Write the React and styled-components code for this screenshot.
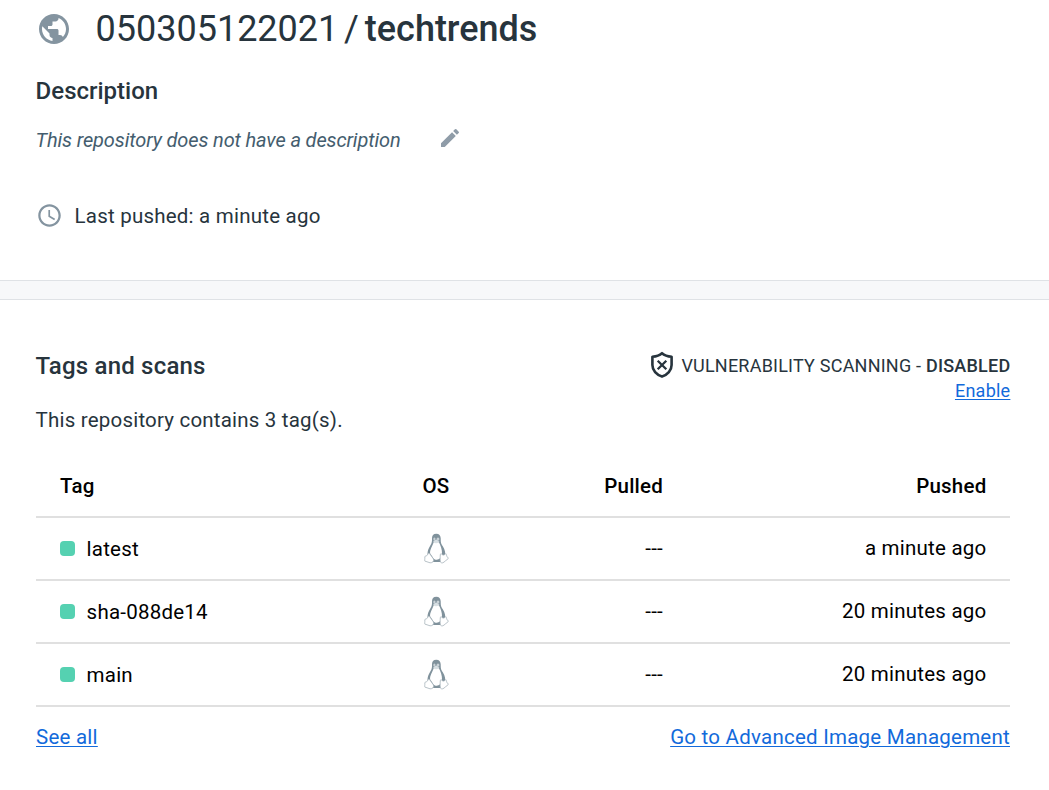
import React from "react";
import styled, { createGlobalStyle } from "styled-components";
import { MdPublic, MdEdit, MdOutlineWatchLater } from "react-icons/md";

const GlobalStyle = createGlobalStyle`
  * { box-sizing: border-box; }
  body {
    margin: 0;
    background: #fff;
    color: #27343d;
    font-family: Roboto, "Liberation Sans", sans-serif;
    font-size: 20.5px;
  }
`;

const Page = styled.main`
  width: 1049px;
  height: 790px;
  overflow: hidden;
  display: flex;
  flex-direction: column;
`;

const Summary = styled.section`
  height: 280px;
  padding: 0 36px;
  display: flex;
  flex-direction: column;
`;

const Title = styled.h1`
  display: flex;
  align-items: center;
  height: 58px;
  margin: 0 0 17px;
  font-size: 36px;
  font-weight: 400;
  white-space: pre;
  word-spacing: -3.1px;
  svg { color: #8494a0; margin-right: 23.5px; }
`;

const TitleText = styled.span`
  font-weight: ${(p) => (p.$strong ? 500 : 400)};
`;

const Heading = styled.h2`
  margin: 0 0 0 -0.4px;
  height: 32px;
  line-height: 32px;
  font-size: 24px;
  font-weight: 500;
  letter-spacing: ${(p) => p.$spacing || "0"};
`;

const Description = styled.div`
  display: flex;
  align-items: center;
  height: 32px;
  margin: 17px 0 0 -0.5px;
  color: #445d6e;
  font-size: 20px;
  font-style: italic;
  letter-spacing: -0.14px;
  svg { color: #8f9ca8; margin: -5px 0 0 37.5px; }
`;

const LastPushed = styled.div`
  display: flex;
  align-items: center;
  height: 32px;
  margin-top: 44px;
  letter-spacing: 0.22px;
  svg { color: #8494a0; margin: -2px 11.5px 0 0; }
`;

const Divider = styled.div`
  height: 20px;
  background: #f7f8fa;
  border: solid #dfe2e6;
  border-width: 1px 0;
`;

const Tags = styled.section`
  padding: 50px 39px 0 36px;
`;

const TagsHeader = styled.header`
  display: flex;
  justify-content: space-between;
  height: 88px;
`;

const Count = styled.p`
  margin: 22px 0 0 -0.4px;
  line-height: 32px;
  letter-spacing: 0.2px;
`;

const Scanning = styled.div`
  display: flex;
  flex-direction: column;
  align-items: flex-end;
  margin-right: -0.4px;
  font-size: 18px;
  letter-spacing: 0.22px;
`;

const ScanStatus = styled.div`
  display: flex;
  align-items: center;
  height: 30px;
  white-space: pre;
  svg { margin-right: 7px; }
  b { font-weight: 500; }
`;

const Link = styled.a`
  color: #126adb;
  text-decoration: underline;
  text-decoration-thickness: 1px;
  text-underline-offset: 2px;
  letter-spacing: 0.24px;
`;

const Table = styled.div`
  margin-top: 17px;
  color: #000;
`;

const Row = styled.div`
  display: grid;
  grid-template-columns: 330px 92px 181px 1fr;
  align-items: center;
  height: 63px;
  padding: 0 23.6px 0 24px;
  border-bottom: 2px solid #e0e0e0;
  letter-spacing: 0.22px;
  font-weight: ${(p) => (p.$head ? 500 : 400)};
`;

const Cell = styled.div`
  display: flex;
  align-items: center;
  gap: 11.6px;
  justify-content: ${(p) => p.$align || "flex-start"};
  margin-top: ${(p) => p.$shift || "0"};
`;

const Status = styled.i`
  width: 15px;
  height: 15px;
  border-radius: 4px;
  background: #55d1b1;
`;

const Footer = styled.footer`
  display: flex;
  justify-content: space-between;
  height: 60px;
  line-height: 60px;
`;

const ShieldIcon = () => (
  <svg width="24" height="28" viewBox="0 0 24 28" fill="none" stroke="#27343d">
    <path d="M12 2.2C9.5 4.4 6.2 5.4 2.4 5.8V14C2.4 19.4 6.5 23.9 12 25.6C17.5 23.9 21.6 19.4 21.6 14V5.8C17.8 5.4 14.5 4.4 12 2.2Z" strokeWidth="2.6" strokeLinejoin="round" />
    <path d="M7.7 9.7L16.3 18.3M16.3 9.7L7.7 18.3" strokeWidth="2.3" />
  </svg>
);

const LinuxIcon = () => (
  <svg width="25" height="31" viewBox="0 0 25 31">
    <path d="M12.3.7C9.4.7 7.8 2.7 8 5.6C8.1 8.3 8 10 6.3 12.5C4.5 15.5 3.4 18 3.5 21.5L5.5 25.5L9 29H17L21.3 22C21.5 17.5 19.5 14.2 17.8 11.8C16.6 9.8 16.8 8 16.7 5.3C16.6 2.4 15.2.7 12.3.7Z" fill="#80929c" />
    <path d="M9.6 9.2C8.6 13 5.7 16.5 6.1 20.3L9.4 25.2C11.3 27.3 14.1 27.3 16.3 25.1L18 20.3C18.2 16.5 16.5 12.2 14.9 9.2Z" fill="#fff" />
    <ellipse cx="10.4" cy="6" rx="1.1" ry="1.5" fill="#c9d2d7" />
    <ellipse cx="14" cy="6" rx="1.4" ry="1.6" fill="#c9d2d7" />
    <path d="M9 8.2L12.2 6.5L15.5 8.2L12 10.6Z" fill="#d7dfe3" />
    <path d="M5.2 20.1L9.5 26C10.2 28.3 8.5 30 6.1 29.8L.9 28.1C.3 27.3 1.1 26 .8 23.9C.8 22.7 2.8 23 3.3 22.2C4.1 21.1 3.8 20.1 5.2 20.1ZM17.3 20.7C18.4 22.6 20.4 22.6 21.7 20.6C22.7 21.2 22.1 23.3 24.3 25C24.8 25.8 22 27.1 20 29.1C18.4 30.5 16.3 30 16.2 28.1C16 25.5 16.2 23.7 16.3 21.9C16.4 21 16.8 20.6 17.3 20.7Z" fill="#fff" stroke="#a6b3ba" strokeWidth=".8" />
  </svg>
);

const tags = [
  { name: "latest", pushed: "a minute ago" },
  { name: "sha-088de14", pushed: "20 minutes ago" },
  { name: "main", pushed: "20 minutes ago" },
];

export default function App() {
  return (
    <Page>
      <GlobalStyle />
      <Summary>
        <Title>
          <MdPublic size={36} />
          <TitleText>050305122021 / </TitleText>
          <TitleText $strong>techtrends</TitleText>
        </Title>
        <Heading>Description</Heading>
        <Description>
          This repository does not have a description
          <MdEdit size={24} />
        </Description>
        <LastPushed>
          <MdOutlineWatchLater size={27} />
          Last pushed: a minute ago
        </LastPushed>
      </Summary>
      <Divider />
      <Tags>
        <TagsHeader>
          <div>
            <Heading $spacing="0.2px">Tags and scans</Heading>
            <Count>This repository contains 3 tag(s).</Count>
          </div>
          <Scanning>
            <ScanStatus>
              <ShieldIcon />
              VULNERABILITY SCANNING - <b>DISABLED</b>
            </ScanStatus>
            <Link>Enable</Link>
          </Scanning>
        </TagsHeader>
        <Table>
          <Row $head>
            <Cell>Tag</Cell>
            <Cell $align="center">OS</Cell>
            <Cell $align="flex-end">Pulled</Cell>
            <Cell $align="flex-end">Pushed</Cell>
          </Row>
          {tags.map((tag) => (
            <Row key={tag.name}>
              <Cell>
                <Status />
                {tag.name}
              </Cell>
              <Cell $align="center"><LinuxIcon /></Cell>
              <Cell $align="flex-end" $shift="-1px">---</Cell>
              <Cell $align="flex-end" $shift="-1px">{tag.pushed}</Cell>
            </Row>
          ))}
        </Table>
        <Footer>
          <Link>See all</Link>
          <Link>Go to Advanced Image Management</Link>
        </Footer>
      </Tags>
    </Page>
  );
}
